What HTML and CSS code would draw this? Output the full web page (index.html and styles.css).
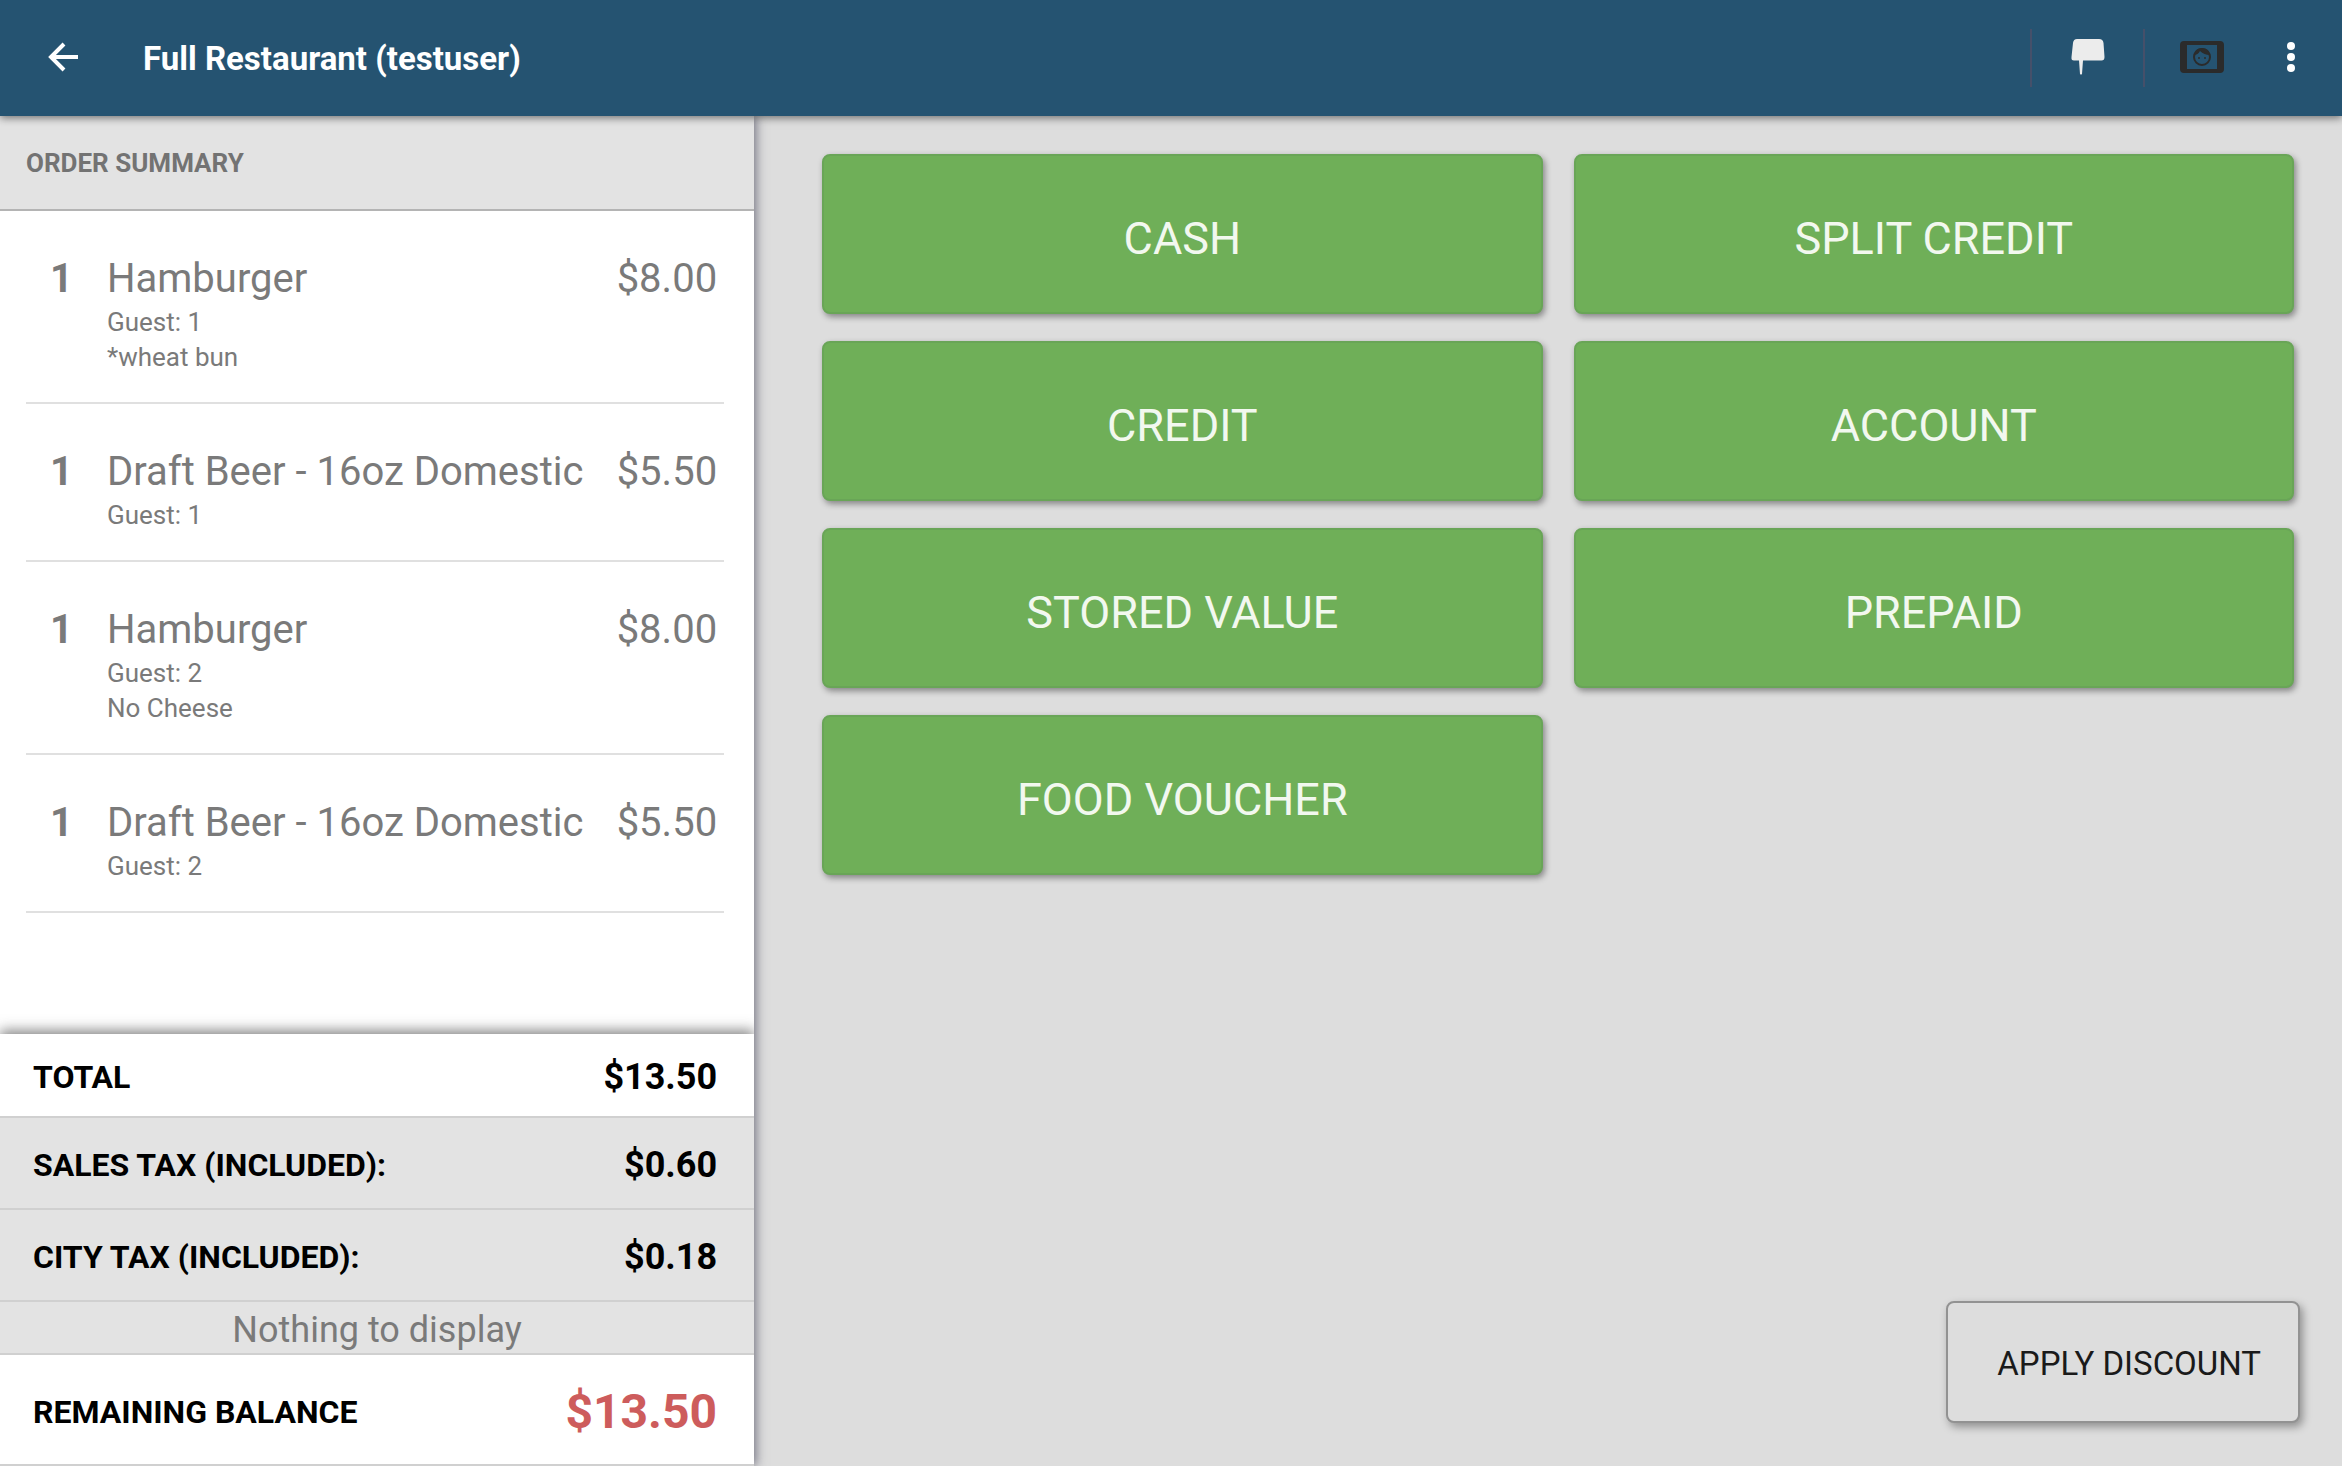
FILE: index.html
```
<!DOCTYPE html>
<html lang="en">
<head>
    <meta charset="UTF-8">
    <meta name="viewport" content="width=device-width, initial-scale=1.0">
    <title>Full Restaurant - Payment</title>

    <link rel="stylesheet" href="styles.css">
</head>
<body>

    <header class="top-bar">
        <button class="icon-btn back-btn" aria-label="Back">
            <svg width="30" height="30" viewBox="0 0 30 30" fill="none" stroke="#fff" stroke-width="4">
                <path d="M30 15H3M16 2L3 15L16 28"/>
            </svg>
        </button>
        <h1>Full Restaurant (testuser)</h1>
        <div class="actions">
            <button class="icon-btn chat-btn" aria-label="Messages">
                <svg width="34" height="38" viewBox="0 0 34 38">
                    <path d="M6 1h22q4 0 4.500 4l1 14q0 3.500-3 3.500H12L11 36q-1 1-2 0L8 22.500H3q-3 0-2.500-3.500l1.500-14q.5-4 4-4z" fill="#ececec"/>
                </svg>
            </button>
            <button class="icon-btn drawer-btn" aria-label="Customer">
                <svg width="44" height="32" viewBox="0 0 44 32">
                    <path fill="#2b2b2b" fill-rule="evenodd" d="M4 0h36q4 0 4 4v24q0 4-4 4H4q-4 0-4-4V4q0-4 4-4zM7 4v24h30V4z"/>
                    <circle cx="22" cy="16" r="8" fill="none" stroke="#2b2b2b" stroke-width="2"/>
                    <path fill="#2b2b2b" d="M14 14q4 0 6-4q4 4 10 4q-1-7-8-7t-8 7z"/>
                    <circle cx="19" cy="17" r="1" fill="#2b2b2b"/>
                    <circle cx="25" cy="17" r="1" fill="#2b2b2b"/>
                </svg>
            </button>
            <button class="icon-btn menu-btn" aria-label="More options">
                <svg width="8" height="30" viewBox="0 0 8 30" fill="#fff">
                    <circle cx="4" cy="4" r="4"/>
                    <circle cx="4" cy="15" r="4"/>
                    <circle cx="4" cy="26" r="4"/>
                </svg>
            </button>
        </div>
    </header>

    <div class="content">
        <!-- Order Summary -->
        <aside class="order">
            <h2>ORDER SUMMARY</h2>

            <ul class="items">
                <li class="item">
                    <span class="qty">1</span>
                    <div class="details">
                        <h3>Hamburger</h3>
                        <p>Guest: 1</p>
                        <p>*wheat bun</p>
                    </div>
                    <span class="price">$8.00</span>
                </li>
                <li class="item">
                    <span class="qty">1</span>
                    <div class="details">
                        <h3>Draft Beer - 16oz Domestic</h3>
                        <p>Guest: 1</p>
                    </div>
                    <span class="price">$5.50</span>
                </li>
                <li class="item">
                    <span class="qty">1</span>
                    <div class="details">
                        <h3>Hamburger</h3>
                        <p>Guest: 2</p>
                        <p>No Cheese</p>
                    </div>
                    <span class="price">$8.00</span>
                </li>
                <li class="item">
                    <span class="qty">1</span>
                    <div class="details">
                        <h3>Draft Beer - 16oz Domestic</h3>
                        <p>Guest: 2</p>
                    </div>
                    <span class="price">$5.50</span>
                </li>
            </ul>

            <!-- Totals -->
            <div class="totals">
                <div class="row total">
                    <span>TOTAL</span>
                    <span class="amount">$13.50</span>
                </div>
                <div class="row tax">
                    <span>SALES TAX (INCLUDED):</span>
                    <span class="amount">$0.60</span>
                </div>
                <div class="row tax">
                    <span>CITY TAX (INCLUDED):</span>
                    <span class="amount">$0.18</span>
                </div>
                <p class="empty">Nothing to display</p>
                <div class="row balance">
                    <span>REMAINING BALANCE</span>
                    <span class="amount">$13.50</span>
                </div>
            </div>
        </aside>

        <!-- Payment Types -->
        <main class="payment">
            <div class="payment-grid">
                <button class="pay-btn">CASH</button>
                <button class="pay-btn">SPLIT CREDIT</button>
                <button class="pay-btn">CREDIT</button>
                <button class="pay-btn">ACCOUNT</button>
                <button class="pay-btn">STORED VALUE</button>
                <button class="pay-btn">PREPAID</button>
                <button class="pay-btn">FOOD VOUCHER</button>
            </div>
            <button class="discount-btn">APPLY DISCOUNT</button>
        </main>
    </div>

</body>
</html>
```
FILE: styles.css
```
* {
    margin: 0;
    padding: 0;
    box-sizing: border-box;
}

body {
    font-family: Roboto, sans-serif;
    background-color: #ddd;
    min-height: 100vh;
    display: flex;
    flex-direction: column;
}

button {
    font-family: inherit;
    cursor: pointer;
}

/* Top bar */
.top-bar {
    position: relative;
    z-index: 1;
    display: flex;
    align-items: center;
    height: 116px;
    padding-right: 19px;
    background-color: #255371;
    color: white;
    box-shadow: 0 2px 8px rgba(0, 0, 0, 0.5);
}

.top-bar h1 {
    font-size: 33px;
    font-weight: 700;
}

.icon-btn {
    display: flex;
    align-items: center;
    justify-content: center;
    height: 58px;
    padding-bottom: 2px;
    background: none;
    border: none;
}

.back-btn {
    width: 96px;
    margin: 0 32px 0 15px;
}

.actions {
    display: flex;
    margin-left: auto;
}

.chat-btn {
    width: 113px;
    border-left: 2px solid #45506a;
}

.drawer-btn {
    width: 116px;
    border-left: 2px solid #45506a;
}

.menu-btn {
    width: 64px;
}

/* Order summary */
.content {
    flex: 1;
    display: flex;
}

.order {
    position: relative;
    flex: 0 0 32.2%;
    display: flex;
    flex-direction: column;
    background-color: white;
    box-shadow: 2px 0 10px rgba(70, 70, 90, 0.7);
}

.order h2 {
    padding: 32px 26px 31px;
    font-size: 26px;
    line-height: 30px;
    font-weight: 700;
    color: #737373;
    background-color: #e3e3e3;
    border-bottom: 2px solid #b4b4b4;
}

.items {
    flex: 1;
    list-style: none;
    padding: 0 30px 0 26px;
}

.item {
    display: flex;
    padding: 42px 7px 27px 24px;
    color: #7a7a7a;
    border-bottom: 2px solid #e0e0e0;
}

.qty,
.price,
.item h3 {
    font-size: 40px;
    line-height: 52px;
    font-weight: 400;
}

.item .qty {
    width: 57px;
    font-weight: 700;
}

.details {
    flex: 1;
}

.details p {
    font-size: 26px;
    line-height: 35px;
}

/* Totals */
.totals {
    box-shadow: 0 -4px 12px rgba(60, 60, 60, 0.6);
    clip-path: inset(-20px 0 0 0);
}

.row {
    display: flex;
    align-items: center;
    justify-content: space-between;
    height: 92px;
    padding: 4px 37px 0 33px;
    font-size: 32px;
    font-weight: 700;
    background-color: white;
    border-bottom: 2px solid #d0d0d0;
}

.total {
    height: 84px;
}

.tax {
    background-color: #e3e3e3;
}

.amount {
    font-size: 36px;
}

.empty {
    padding: 6px 0 1px;
    font-size: 36px;
    line-height: 44px;
    text-align: center;
    color: #7a7a7a;
    background-color: #e3e3e3;
    border-bottom: 2px solid #d0d0d0;
}

.balance {
    height: 111px;
}

.balance .amount {
    font-size: 48px;
    color: #cd5c5c;
}

/* Payment types */
.payment {
    flex: 1;
    display: flex;
    flex-direction: column;
    justify-content: space-between;
    padding: 38px 48px 43px 68px;
}

.payment-grid {
    display: grid;
    grid-template-columns: repeat(2, 1fr);
    gap: 27px 31px;
}

.pay-btn {
    height: 160px;
    padding-top: 8px;
    font-size: 45px;
    font-weight: 400;
    color: #f2f8ef;
    background-color: #6faf58;
    border: 2px solid #69a557;
    border-radius: 8px;
    box-shadow: 2px 3px 6px rgba(0, 0, 0, 0.4);
}

.pay-btn:hover {
    background-color: #64a04f;
}

.discount-btn {
    align-self: flex-end;
    height: 122px;
    padding: 2px 37px 0 49px;
    margin-right: -6px;
    font-size: 33px;
    color: #1a1a1a;
    background-color: #ddd;
    border: 2px solid #929292;
    border-radius: 8px;
    box-shadow: 3px 4px 8px rgba(0, 0, 0, 0.35);
}
```
